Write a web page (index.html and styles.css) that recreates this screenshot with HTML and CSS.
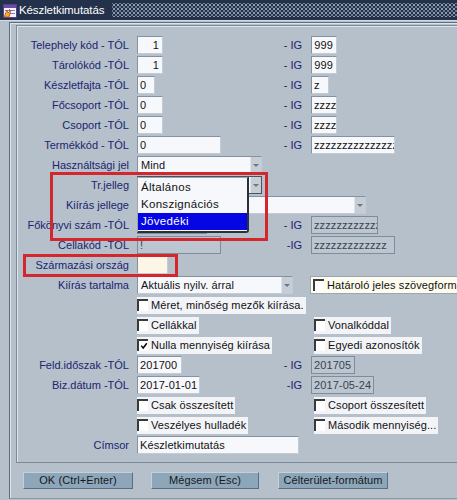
FILE: index.html
```html
<!DOCTYPE html>
<html lang="hu">
<head>
<meta charset="utf-8">
<title>Készletkimutatás</title>
<link rel="stylesheet" href="styles.css">
</head>
<body>
<div class="win">
  <div class="titlebar">
    <svg class="ticon" width="14" height="14" viewBox="0 0 14 14">
      <rect x="0.5" y="0.5" width="13" height="13" fill="#f4f4ff" stroke="#5a3c8c"/>
      <rect x="1" y="1" width="12" height="3" fill="#6a4ca8"/>
      <line x1="2" y1="6.5" x2="12" y2="6.5" stroke="#8a7ab8"/>
      <line x1="2" y1="9.5" x2="12" y2="9.5" stroke="#8a7ab8"/>
      <line x1="6.5" y1="5" x2="6.5" y2="12" stroke="#8a7ab8"/>
      <path d="M1 13 L4 6 L5 9 L8 6 L6 13 Z" fill="#f0b020" stroke="#c03020" stroke-width="0.6"/>
    </svg>
    <span class="ttext">Készletkimutatás</span>
    <div class="tdots"></div>
  </div>
  <div class="frame">
    <div class="panel">
      <div class="form">
        <div class="lbl">Telephely kód - TÓL</div>
        <div class="fld w26 right">1</div>
        <div class="ig">- IG</div>
        <div class="fld fld2 w26 right">999</div>

        <div class="lbl">Tárolókód -TÓL</div>
        <div class="fld w26 right">1</div>
        <div class="ig">- IG</div>
        <div class="fld fld2 w26 right">999</div>

        <div class="lbl">Készletfajta -TÓL</div>
        <div class="fld w18">0</div>
        <div class="ig">- IG</div>
        <div class="fld fld2 w18">z</div>

        <div class="lbl">Főcsoport -TÓL</div>
        <div class="fld w26">0</div>
        <div class="ig">- IG</div>
        <div class="fld fld2 w26">zzzz</div>

        <div class="lbl">Csoport -TÓL</div>
        <div class="fld w26">0</div>
        <div class="ig">- IG</div>
        <div class="fld fld2 w26">zzzz</div>

        <div class="lbl">Termékkód - TÓL</div>
        <div class="fld w84">0</div>
        <div class="ig">- IG</div>
        <div class="fld fld2 w84">zzzzzzzzzzzzzzz</div>

        <div class="lbl">Használtsági jel</div>
        <div class="sel w125"><span class="sv">Mind</span><span class="arr"></span></div>

        <div class="lbl">Tr.jelleg</div>
        <div class="sel w125 focus"><span class="sv"></span><span class="arr"></span></div>

        <div class="lbl">Kiírás jellege</div>
        <div class="sel wide w229"><span class="sv"></span><span class="arr"></span></div>

        <div class="lbl">Főkönyvi szám -TÓL</div>
        <div class="fld dis w70"></div>
        <div class="ig">- IG</div>
        <div class="fld fld2 dis w67">zzzzzzzzzzzz</div>

        <div class="lbl">Cellakód -TÓL</div>
        <div class="fld dis w84">!</div>
        <div class="ig">-IG</div>
        <div class="fld fld2 dis w84">zzzzzzzzzzzzz</div>

        <div class="lbl">Származási ország</div>
        <div class="fld cream w31"></div>

        <div class="lbl">Kiírás tartalma</div>
        <div class="sel w156"><span class="sv">Aktuális nyilv. árral</span><span class="arr"></span></div>
        <div class="cb cbr hat"><span class="box"></span>Határoló jeles szövegformátum</div>

        <div class="cb span"><span class="box"></span>Méret, minőség mezők kiírása.</div>

        <div class="cb"><span class="box"></span>Cellákkal</div>
        <div class="cb cbr"><span class="box"></span>Vonalkóddal</div>

        <div class="cb span"><span class="box"><svg width="10" height="10" viewBox="0 0 10 10"><path d="M1.5 4.5 L4 7.5 L8.5 1.5" fill="none" stroke="#000" stroke-width="1.8"/></svg></span>Nulla mennyiség kiírása</div>
        <div class="cb cbr"><span class="box"></span>Egyedi azonosítók</div>

        <div class="lbl">Feld.időszak -TÓL</div>
        <div class="fld w45">201700</div>
        <div class="ig">- IG</div>
        <div class="fld fld2 dis w44">201705</div>

        <div class="lbl">Biz.dátum -TÓL</div>
        <div class="fld w63">2017-01-01</div>
        <div class="ig">-IG</div>
        <div class="fld fld2 dis w63">2017-05-24</div>

        <div class="cb span"><span class="box"></span>Csak összesített</div>
        <div class="cb cbr"><span class="box"></span>Csoport összesített</div>

        <div class="cb span"><span class="box"></span>Veszélyes hulladék</div>
        <div class="cb cbr"><span class="box"></span>Második mennyiség...</div>

        <div class="lbl">Címsor</div>
        <div class="fld span w162">Készletkimutatás</div>
      </div>
    </div>
    <div class="buttons">
      <div class="btn bw110">OK (Ctrl+Enter)</div>
      <div class="btn bw108">Mégsem (Esc)</div>
      <div class="btn bw110">Célterület-formátum</div>
    </div>
  </div>

  <div class="dropdown">
    <div class="opt">Általános</div>
    <div class="opt">Konszignációs</div>
    <div class="opt sel-opt">Jövedéki</div>
  </div>
  <div class="redbox r1"></div>
  <div class="redbox r2"></div>
</div>
</body>
</html>
```

FILE: styles.css
```css
* { box-sizing: border-box; }

html, body {
  margin: 0;
  padding: 0;
  background: #b5c0cb;
}

.win {
  position: relative;
  width: 457px;
  height: 500px;
  overflow: hidden;
  background: #b5c0cb;
  font-family: "Liberation Sans", Arial, sans-serif;
  font-size: 11px;
}

/* title bar */
.titlebar {
  height: 21px;
  background: #24314a;
  display: flex;
  align-items: center;
  border-bottom: 1px solid #d5dce4;
  padding-left: 3px;
}
.ticon { flex: none; margin-top: 1px; }
.ttext {
  color: #ffffff;
  font-size: 11.5px;
  margin-left: 2px;
  letter-spacing: -0.1px;
}
.tdots {
  flex: 1;
  height: 14px;
  margin-left: 8px;
  background-image:
    radial-gradient(circle, #8d9ab0 0.9px, transparent 1.3px),
    radial-gradient(circle, #6c7a92 0.9px, transparent 1.3px);
  background-size: 4px 4px, 4px 4px;
  background-position: 0 0, 2px 2px;
}

/* frame */
.frame {
  margin-top: 1px;
  margin-left: 9px;
  height: 477px;
  border-top: 1px solid #5e6e80;
  border-left: 1px solid #5e6e80;
  border-bottom: 1px solid #8a98a6;
  box-shadow: inset 1px 1px 0 #dde4ea;
}

.panel {
  margin-top: 2px;
  margin-left: 6px;
  width: 470px;
  height: 438px;
  border: 1px solid #7c8b9b;
  border-right: none;
  box-shadow: inset 1px 1px 0 #dde4ea;
  padding-top: 9px;
  padding-bottom: 7px;
}

.form {
  display: grid;
  grid-template-columns: 120px 146px 28px 1fr;
  grid-auto-rows: 20px;
}

.lbl {
  grid-column: 1;
  text-align: right;
  padding-right: 8px;
  color: #1b2470;
  line-height: 20px;
  white-space: nowrap;
}
.ig {
  grid-column: 3;
  text-align: right;
  padding-right: 9px;
  color: #1b2470;
  line-height: 20px;
  white-space: nowrap;
}

.fld {
  grid-column: 2;
  align-self: center;
  justify-self: start;
  height: 18px;
  line-height: 16px;
  background: #f7f8fc;
  border: 1px solid #8592a1;
  border-right-color: #c3ccd6;
  border-bottom-color: #c3ccd6;
  padding: 0 2px;
  color: #111;
  white-space: nowrap;
  overflow: hidden;
  letter-spacing: 0.1px;
}
.fld2 { grid-column: 4; }
.fld.span { grid-column: 2 / 5; }
.right { text-align: right; padding-right: 3px; }
.dis {
  background: #bcc6d0;
  color: #3a4250;
  border-color: #7f8c9b;
}
.cream { background: #fdf6e6; }

.w18 { width: 18px; }
.w26 { width: 26px; }
.w31 { width: 31px; }
.w44 { width: 44px; }
.w45 { width: 45px; }
.w63 { width: 63px; }
.w67 { width: 67px; }
.w70 { width: 70px; }
.w84 { width: 84px; }
.w125 { width: 125px; }
.w156 { width: 156px; }
.w162 { width: 162px; }
.w229 { width: 229px; }

/* select */
.sel {
  grid-column: 2;
  align-self: center;
  justify-self: start;
  height: 18px;
  display: flex;
  background: #f7f8fc;
  border: 1px solid #8592a1;
  border-right-color: #c3ccd6;
  border-bottom-color: #c3ccd6;
  color: #111;
  letter-spacing: 0.1px;
}
.sel.wide { grid-column: 2 / 5; }
.sv {
  flex: 1;
  padding-left: 3px;
  line-height: 16px;
  white-space: nowrap;
  overflow: hidden;
}
.arr {
  width: 11px;
  background: #c7cdd5;
  border-left: 1px solid #dfe4ea;
  display: flex;
  align-items: center;
  justify-content: center;
}
.arr::after {
  content: "";
  border-left: 3px solid transparent;
  border-right: 3px solid transparent;
  border-top: 3px solid #6e7784;
}
.sel.focus { border-color: #4a5360; }

/* checkbox items */
.cb {
  grid-column: 2;
  align-self: center;
  justify-self: start;
  height: 17px;
  display: flex;
  align-items: center;
  background: #f2f4f8;
  color: #111;
  padding-right: 2px;
  white-space: nowrap;
  letter-spacing: 0.1px;
}
.cb.span { grid-column: 2 / 4; }
.cb.cbr { grid-column: 4; margin-left: 3px; }
.cb.hat {
  margin-left: -1px;
  height: 18px;
  background: #fdfcee;
  border: 1px solid #9aa6b2;
  border-right: none;
  padding-left: 2px;
}
.box {
  flex: none;
  width: 11px;
  height: 12px;
  margin-right: 3px;
  background: #ffffff;
  border-top: 2px solid #3a3a3a;
  border-left: 2px solid #3a3a3a;
  display: flex;
  align-items: center;
  justify-content: center;
}
.box svg { margin-left: 1px; }

/* buttons */
.buttons {
  display: flex;
  gap: 18px;
  padding-left: 13px;
  margin-top: 9px;
}
.btn {
  height: 17px;
  line-height: 15px;
  text-align: center;
  background: #8ea6b9;
  border: 1px solid #5b6d80;
  border-top-color: #c4d1dc;
  border-left-color: #c4d1dc;
  color: #151a22;
  letter-spacing: 0.1px;
}
.bw110 { width: 110px; }
.bw108 { width: 108px; margin-right: 1px; }

/* dropdown list */
.dropdown {
  position: absolute;
  left: 137px;
  top: 177px;
  width: 112px;
  height: 56px;
  background: #f6f8fc;
  border: 1px solid #9aa5b1;
  border-right: 2px solid #2d2f36;
  border-bottom: 2px solid #2d2f36;
  border-bottom-right-radius: 3px;
  padding-top: 1px;
  color: #111;
  font-size: 11.5px;
}
.opt {
  height: 17px;
  line-height: 17px;
  padding-left: 3px;
  letter-spacing: 0.3px;
}
.sel-opt {
  background: #0606e4;
  color: #ffffff;
}

/* red highlights */
.redbox {
  position: absolute;
  border: 3px solid #d3262d;
}
.r1 { left: 50px; top: 172px; width: 218px; height: 69px; }
.r2 { left: 23px; top: 254px; width: 155px; height: 23px; }
```
